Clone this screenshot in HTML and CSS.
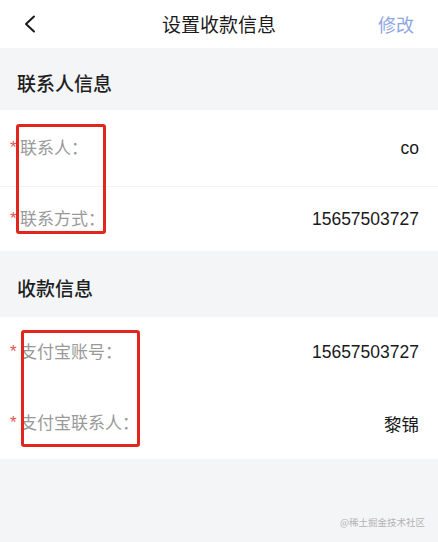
FILE: index.html
```html
<!DOCTYPE html>
<html lang="zh-CN">
<head>
  <meta charset="UTF-8" />
  <meta name="viewport" content="width=device-width, initial-scale=1.0"/>
  <title>设置收款信息</title>
  <link rel="stylesheet" href="styles.css">
</head>
<body>
  <div class="nav-bar">
    <span class="nav-back">
      <svg width="14" height="20" viewBox="0 0 14 20">
        <polyline points="11,2.5 3,10 11,17.5" fill="none" stroke="#1a1a1a" stroke-width="2" stroke-linecap="round" stroke-linejoin="round"/>
      </svg>
    </span>
    <span class="nav-title">设置收款信息</span>
    <span class="nav-action">修改</span>
  </div>

  <div class="section-title first">联系人信息</div>
  <div class="card">
    <div class="row row-tall divider">
      <span class="label"><i class="req">*</i>联系人：</span>
      <span class="value">co</span>
    </div>
    <div class="row row-short">
      <span class="label"><i class="req">*</i>联系方式：</span>
      <span class="value">15657503727</span>
    </div>
  </div>

  <div class="section-title">收款信息</div>
  <div class="card">
    <div class="row row-mid">
      <span class="label"><i class="req">*</i>支付宝账号：</span>
      <span class="value">15657503727</span>
    </div>
    <div class="row row-mid">
      <span class="label"><i class="req">*</i>支付宝联系人：</span>
      <span class="value">黎锦</span>
    </div>
  </div>

  <div class="watermark">@稀土掘金技术社区</div>

  <div class="mark mark-one"></div>
  <div class="mark mark-two"></div>
</body>
</html>
```

FILE: styles.css
```css
body {
  margin: 0;
  width: 438px;
  min-height: 542px;
  background-color: #f4f5f7;
  font-family: "Noto Sans CJK SC", "Liberation Sans", sans-serif;
  color: #1a1a1a;
  position: relative;
}

.nav-bar {
  height: 48px;
  background-color: #ffffff;
  display: flex;
  align-items: center;
  justify-content: space-between;
  padding: 0 24px 0 23px;
  position: relative;
}

.nav-back {
  display: flex;
  width: 40px;
}

.nav-title {
  position: absolute;
  left: 0;
  right: 0;
  text-align: center;
  font-size: 19px;
  line-height: 48px;
  pointer-events: none;
}

.nav-action {
  font-size: 18px;
  color: #8ea6e2;
}

.section-title {
  height: 66px;
  box-sizing: border-box;
  padding: 7px 0 0 17px;
  display: flex;
  align-items: center;
  font-size: 19px;
  font-weight: 500;
  color: #1f1f1f;
}

.section-title.first {
  height: 62px;
}

.card {
  background-color: #ffffff;
}

.row {
  display: flex;
  align-items: center;
  justify-content: space-between;
  padding: 0 19px 0 10px;
}

.row-tall {
  height: 77px;
}

.row-short {
  height: 64px;
}

.row-mid {
  height: 71px;
}

.divider {
  border-bottom: 1px solid #f2f3f5;
  box-sizing: border-box;
}

.label {
  font-size: 17px;
  line-height: 20px;
  color: #999999;
  display: flex;
  align-items: flex-start;
  margin-top: -3px;
}

.req {
  font-style: normal;
  color: #e6534b;
  font-family: "Liberation Sans", sans-serif;
  font-size: 17px;
  line-height: 1;
  margin-top: 2px;
  width: 10px;
}

.value {
  font-family: "Liberation Sans", "Noto Sans CJK SC", sans-serif;
  font-size: 17.5px;
  color: #1a1a1a;
}

.watermark {
  position: absolute;
  right: 13px;
  bottom: 13px;
  font-size: 9.5px;
  color: #b3b3b3;
}

.mark {
  position: absolute;
  border: 3px solid #e3261d;
  border-radius: 3px;
  box-sizing: border-box;
}

.mark-one {
  left: 16px;
  top: 124px;
  width: 90px;
  height: 110px;
}

.mark-two {
  left: 21px;
  top: 330px;
  width: 119px;
  height: 117px;
}
```
